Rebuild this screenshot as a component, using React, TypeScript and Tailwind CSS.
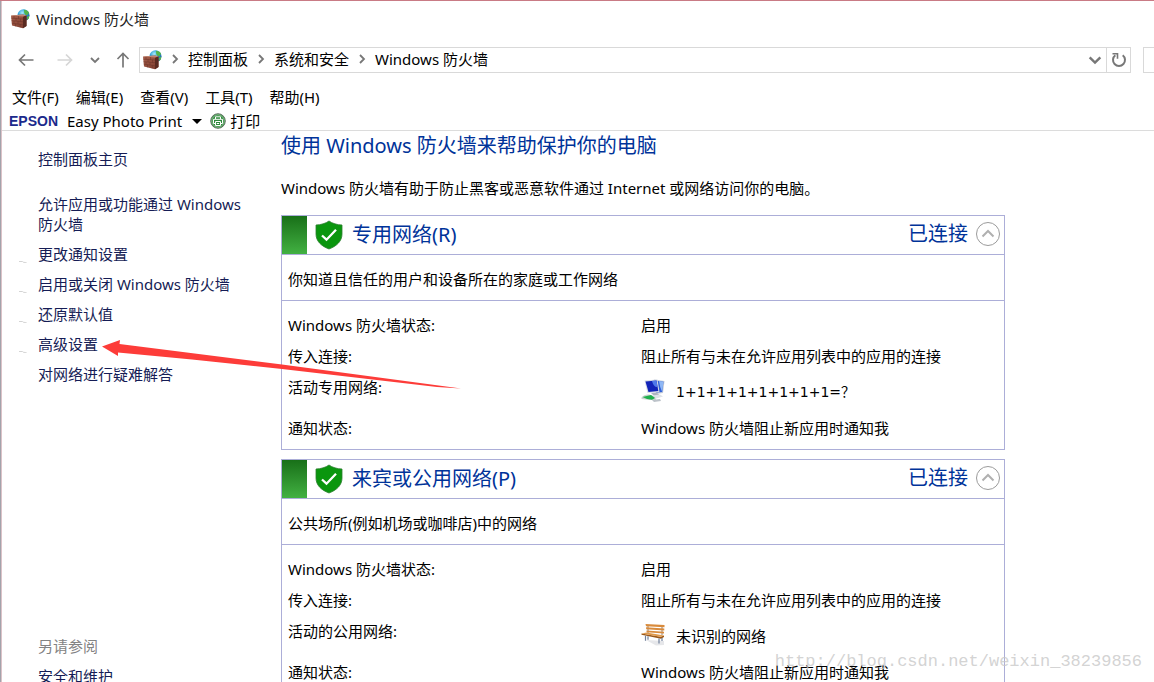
import type { ReactNode } from "react";
import { clsx } from "clsx";

interface SideLink {
  label: string;
  shield?: boolean;
}

interface NetworkRow {
  label: string;
  value: string;
  icon?: ReactNode;
  plain?: boolean;
}

interface NetworkPanelProps {
  title: string;
  description: string;
  rows: NetworkRow[];
}

const menus = ["文件(F)", "编辑(E)", "查看(V)", "工具(T)", "帮助(H)"];
const crumbs = ["控制面板", "系统和安全", "Windows 防火墙"];

const sideLinks: SideLink[] = [
  { label: "允许应用或功能通过 Windows 防火墙" },
  { label: "更改通知设置", shield: true },
  { label: "启用或关闭 Windows 防火墙", shield: true },
  { label: "还原默认值", shield: true },
  { label: "高级设置", shield: true },
  { label: "对网络进行疑难解答" },
];

function FirewallIcon() {
  return (
    <svg viewBox="0 0 20 20" className="h-5 w-5 shrink-0" aria-hidden>
      <defs>
        <radialGradient id="globe" cx="0.4" cy="0.3" r="0.8">
          <stop offset="0" stopColor="#a9ecfb" />
          <stop offset="0.45" stopColor="#2b9fd8" />
          <stop offset="1" stopColor="#123f9c" />
        </radialGradient>
        <linearGradient id="brick" x1="0" y1="0" x2="1" y2="1">
          <stop offset="0" stopColor="#a9604c" />
          <stop offset="1" stopColor="#7a3a2c" />
        </linearGradient>
      </defs>
      <circle cx="13.500" cy="6.300" r="6" fill="url(#globe)" />
      <path d="M14 .8c2 0 4 1 5 2.800l-1 2.200-2.300.3-1.500-2zM17 8l2.200-1.500c.2 2-.6 3.600-2 4.500z" fill="#54b54a" />
      <path d="M1 6.500 13 5.500l3.500 1V17L13 19.200 2 16.500z" fill="url(#brick)" />
      <path d="M13 7.500 16.500 6.500V17L13 19.200z" fill="#5a2a20" />
      <path d="m1 6.500 12-1 3.500 1L13 7.500z" fill="#c08672" />
      <path
        d="M1.200 9.200 13 10M1.500 11.700l11.500 1M1.800 14.200l11.200 1.600M4 7v2.200M8.500 7v2.700M6 9.400v2.500M10.500 9.800v2.700M4 11.800v2.500M8 12.300V15M5.500 14.700v2.600M10.300 15.400v2.900"
        stroke="#6b3328"
        strokeWidth="0.5"
        fill="none"
      />
    </svg>
  );
}

function Chevron({ className }: { className?: string }) {
  return (
    <svg viewBox="0 0 12 12" className={clsx("h-3 w-3 shrink-0", className)} aria-hidden>
      <path d="m2 4 4 4 4-4" fill="none" stroke="currentColor" strokeWidth="1.8" />
    </svg>
  );
}

function ArrowIcon({ className }: { className?: string }) {
  return (
    <svg viewBox="0 0 16 16" className={clsx("h-4 w-4 shrink-0", className)} aria-hidden>
      <path d="M15.500 8H1.500M7 2.500 1.500 8 7 13.500" fill="none" stroke="currentColor" strokeWidth="1.700" />
    </svg>
  );
}

function PrinterIcon() {
  return (
    <svg viewBox="0 0 16 16" className="h-4 w-4" aria-hidden>
      <circle cx="8" cy="8" r="7.300" fill="#2f8a3c" stroke="#5d6b5f" strokeWidth="0.900" />
      <circle cx="8" cy="8" r="6.200" fill="none" stroke="#c4e4c6" strokeWidth="0.600" />
      <path
        d="M5.500 6V3.800h5V6M5 10.500H3.500V6.300h9v4.200H11M5.500 8.500h5v4h-5zM6.800 10.500h2.400"
        fill="none"
        stroke="#fff"
        strokeWidth="1"
      />
    </svg>
  );
}

function ShieldIcon() {
  return (
    <svg viewBox="0 0 28 30" className="h-[30px] w-7 shrink-0" aria-hidden>
      <path
        d="M14 1c3.500 2.500 8 3.800 13 4v9c0 7-5 12-13 15C6 26 1 21 1 14V5c5-.2 9.500-1.500 13-4z"
        fill="#0a960e"
        stroke="#2b7d2e"
        strokeWidth="0.800"
      />
      <path d="m7 15.500 4.500 4.200 9.500-10" fill="none" stroke="#fff" strokeWidth="2.300" />
    </svg>
  );
}

function ComputersIcon() {
  return (
    <svg viewBox="0 0 24 24" className="h-6 w-6 shrink-0" aria-hidden>
      <path d="m13 .5 10.500 1.500-1.500 12-7 1z" fill="#c5cbd6" />
      <path d="m14 1.500 8.500 1.200-1.300 10.300-6 .5z" fill="#2f5fd8" />
      <path d="m18 2 4.500.7-1.300 10.300-2-5z" fill="#8fb7f5" />
      <path d="m3.500 1.500 13-1L18.500 13 6.500 14z" fill="#d5dae4" />
      <path d="m4.500 2.500 11-1L17.300 12 7.500 12.900z" fill="#1324b8" />
      <path d="m11 2 4.500-.4 1 6.400c-2.300.5-4.300-1.500-5.500-6z" fill="#4f79ea" />
      <path d="m10 14 5.500-.5 3.500 3-5 1.300z" fill="#aeb4bf" />
      <path d="m7 17 12-1.500 3 2L12 20.500z" fill="#dfe3e8" />
      <path d="M.5 18.500c2-2.500 6-3.500 9-2.500l4.500 2 1 3H9L.5 20z" fill="#cbd2cf" />
      <path d="M1.500 18 10 16l4 3-3 1.700-5-.7z" fill="#1fb04c" />
      <path d="m11 21 8-1 1 2-7 1z" fill="#bcc2c9" />
    </svg>
  );
}

function BenchIcon() {
  return (
    <svg viewBox="0 0 24 24" className="h-6 w-6 shrink-0" aria-hidden>
      <path d="m5 17 18 1v4l-8 .5z" fill="#e6e7ea" />
      <path d="M7 2v9M21 3v9" stroke="#8d8078" strokeWidth="1" />
      <path d="m4.500 1 19 1v2.200L5 3.200zM5 4.300l18.300 1.200v2L5.200 6.300zM5.400 7.400l17.600 1.400v1.700L5.600 9.200z" fill="#d98b3c" />
      <path d="m.5 10.500 19 3.200 3.500-1.200v1.500L20 15.700.5 11.800z" fill="#9a5718" />
      <path d="m.5 10.500 5-1L23 12.500 19.500 13.700z" fill="#e09a4c" />
      <path d="M4.500 12.700v5M7 13.200v3.500M18 15.500v5M21 15v3" stroke="#71809b" strokeWidth="1.200" />
    </svg>
  );
}

function TitleBar() {
  return (
    <header className="flex h-9 items-center gap-[6px] pl-2 text-[#222]">
      <FirewallIcon />
      <h1>Windows 防火墙</h1>
    </header>
  );
}

function NavBar() {
  return (
    <nav className="mt-[10px] flex h-[26px] items-stretch overflow-hidden pl-4 text-[#777]">
      <div className="mr-2 flex items-center">
        <button aria-label="后退">
          <ArrowIcon />
        </button>
        <button aria-label="前进" className="ml-[23px] text-[#d6d6d6]">
          <ArrowIcon className="rotate-180" />
        </button>
        <button aria-label="最近浏览的位置" className="ml-4">
          <Chevron />
        </button>
        <button aria-label="向上" className="ml-[14px]">
          <ArrowIcon className="rotate-90" />
        </button>
      </div>
      <div className="flex min-w-0 flex-1 items-center border border-[#d9d9d9] pl-[2px]">
        <FirewallIcon />
        <ol className="flex flex-1 items-center pb-[2px]">
          {crumbs.map((crumb) => (
            <li key={crumb} className="flex items-center">
              <Chevron className="mx-[7px] -rotate-90" />
              <a href="#" className="text-black">
                {crumb}
              </a>
            </li>
          ))}
        </ol>
        <button aria-label="以前的位置" className="px-[3px]">
          <Chevron className="h-4 w-4" />
        </button>
        <button
          aria-label="刷新"
          className="flex h-full w-6 items-center justify-center border-l border-[#d9d9d9]"
        >
          <svg viewBox="0 0 16 16" className="h-4 w-4" aria-hidden>
            <path d="M11.700 3.200A6 6 0 1 1 4.300 3.200" fill="none" stroke="currentColor" strokeWidth="2" />
            <path d="M1.500 1.800h5v5" fill="none" stroke="currentColor" strokeWidth="1.600" />
          </svg>
        </button>
      </div>
      <input
        type="search"
        aria-label="搜索控制面板"
        placeholder="搜"
        className="ml-3 w-[11px] shrink-0 border-y border-l border-[#d9d9d9] pl-2 placeholder:text-[#777]"
      />
    </nav>
  );
}

function Toolbars() {
  return (
    <div className="mt-3 border-b border-[#dcdcdc]">
      <div className="flex h-6 items-center gap-[17px] pl-[10px]">
        {menus.map((menu) => (
          <button key={menu}>{menu}</button>
        ))}
      </div>
      <div className="flex h-[21px] items-center pt-[3px] pl-[7px]">
        <span className="font-['Liberation_Sans',sans-serif] text-sm font-bold text-[#1b2a8c]">EPSON</span>
        <button className="ml-[9px] flex items-center gap-[10px]">
          Easy Photo Print
          <svg viewBox="0 0 10 5" className="h-[5px] w-[10px]" aria-hidden>
            <path d="M0 0h10L5 5z" />
          </svg>
        </button>
        <button className="ml-2 flex items-center gap-1">
          <PrinterIcon />
          打印
        </button>
      </div>
    </div>
  );
}

function Sidebar() {
  return (
    <aside className="w-[279px] shrink-0 pt-[18px] pl-[17px] leading-5 text-[#151c55]">
      <a href="#" className="ml-[19px] block">
        控制面板主页
      </a>
      <ul className="mt-[25px] space-y-[10px]">
        {sideLinks.map((link) => (
          <li key={link.label} className="flex items-end gap-[11px]">
            <svg viewBox="0 0 8 3" className="h-[3px] w-2 shrink-0" aria-hidden>
              {link.shield && (
                <path d="M0 .5h3.500c.5 1 2 1 4 1" fill="none" stroke="#cfcfcf" strokeWidth="0.900" />
              )}
            </svg>
            <a href="#" className="max-w-[212px]">
              {link.label}
            </a>
          </li>
        ))}
      </ul>
      <h2 className="mt-63 ml-[19px] text-[#838383]">另请参阅</h2>
      <a href="#" className="mt-[10px] ml-[19px] block">
        安全和维护
      </a>
    </aside>
  );
}

function NetworkPanel({ title, description, rows }: NetworkPanelProps) {
  return (
    <section className="border border-[#acaed8]">
      <div className="flex h-[39px] items-center border-b border-[#acaed8] text-xl text-[#003399]">
        <div className="h-full w-[25px] bg-linear-to-b from-[#187018] to-[#42b142]" />
        <div className="ml-2">
          <ShieldIcon />
        </div>
        <h3 className="ml-[9px] flex-1">{title}</h3>
        <div className="flex items-center gap-2 pr-1 pb-[3px]">
          已连接
          <button aria-label="折叠" className="text-[#9b9b9b]">
            <svg viewBox="0 0 24 24" className="h-6 w-6" aria-hidden>
              <circle cx="12" cy="12" r="11.500" fill="none" stroke="currentColor" />
              <path d="m6.500 14.500 5.500-5.500 5.500 5.500" fill="none" stroke="#b0b0b0" strokeWidth="2" />
            </svg>
          </button>
        </div>
      </div>
      <p className="flex h-[46px] items-center border-b border-[#acaed8] pt-1 pl-[6px]">{description}</p>
      <dl className="px-[6px] pt-[9px] pb-[5px] leading-[31px]">
        {rows.map((row) => (
          <div key={row.label} className="grid grid-cols-[353px_1fr]">
            <dt>{row.label}</dt>
            <dd className={clsx("flex items-center gap-[11px]", row.icon && "h-[41px] pb-1")}>
              {row.icon}
              <span
                className={clsx(
                  row.icon && "pt-1",
                  row.plain && "font-['DejaVu_Sans','Noto_Sans_CJK_SC',sans-serif] text-sm leading-[31px]",
                )}
              >
                {row.value}
              </span>
            </dd>
          </div>
        ))}
      </dl>
    </section>
  );
}

export default function App() {
  return (
    <div className="relative h-screen overflow-hidden border-t border-[#c97b85] bg-white font-['Noto_Sans','Noto_Sans_CJK_SC',sans-serif] text-[15px] text-black">
      <div className="min-h-full border-l border-[#a3a3ab]">
        <div className="border-l border-[#dcc3c8]">
          <TitleBar />
          <NavBar />
          <Toolbars />
          <div className="flex">
            <Sidebar />
            <main className="max-w-[724px] min-w-0 flex-1 pt-[1px]">
              <h2 className="text-xl text-[#003399]">使用 Windows 防火墙来帮助保护你的电脑</h2>
              <p className="mt-4 mb-[15px] leading-6">
                Windows 防火墙有助于防止黑客或恶意软件通过 Internet 或网络访问你的电脑。
              </p>
              <div className="space-y-[9px]">
                <NetworkPanel
                  title="专用网络(R)"
                  description="你知道且信任的用户和设备所在的家庭或工作网络"
                  rows={[
                    { label: "Windows 防火墙状态:", value: "启用" },
                    { label: "传入连接:", value: "阻止所有与未在允许应用列表中的应用的连接" },
                    { label: "活动专用网络:", value: "1+1+1+1+1+1+1+1=？", icon: <ComputersIcon />, plain: true },
                    { label: "通知状态:", value: "Windows 防火墙阻止新应用时通知我" },
                  ]}
                />
                <NetworkPanel
                  title="来宾或公用网络(P)"
                  description="公共场所(例如机场或咖啡店)中的网络"
                  rows={[
                    { label: "Windows 防火墙状态:", value: "启用" },
                    { label: "传入连接:", value: "阻止所有与未在允许应用列表中的应用的连接" },
                    { label: "活动的公用网络:", value: "未识别的网络", icon: <BenchIcon /> },
                    { label: "通知状态:", value: "Windows 防火墙阻止新应用时通知我" },
                  ]}
                />
              </div>
            </main>
          </div>
        </div>
      </div>

      {/* red pointer to the advanced settings link */}
      <svg viewBox="0 0 360 50" className="pointer-events-none absolute top-[338px] left-[102px] h-[50px] w-[360px]" aria-hidden>
        <path d="M0 7.500 18 1 17.500 5 180 25.500 359 49.500 335 48 180 30 90 20.500 16 13.500 16 17z" fill="#fd3c39" />
      </svg>
      <p className="pointer-events-none absolute right-3 bottom-2 font-['Liberation_Mono',monospace] text-[17px] text-[#c8c8c8]/80">
        http://blog.csdn.net/weixin_38239856
      </p>
    </div>
  );
}
